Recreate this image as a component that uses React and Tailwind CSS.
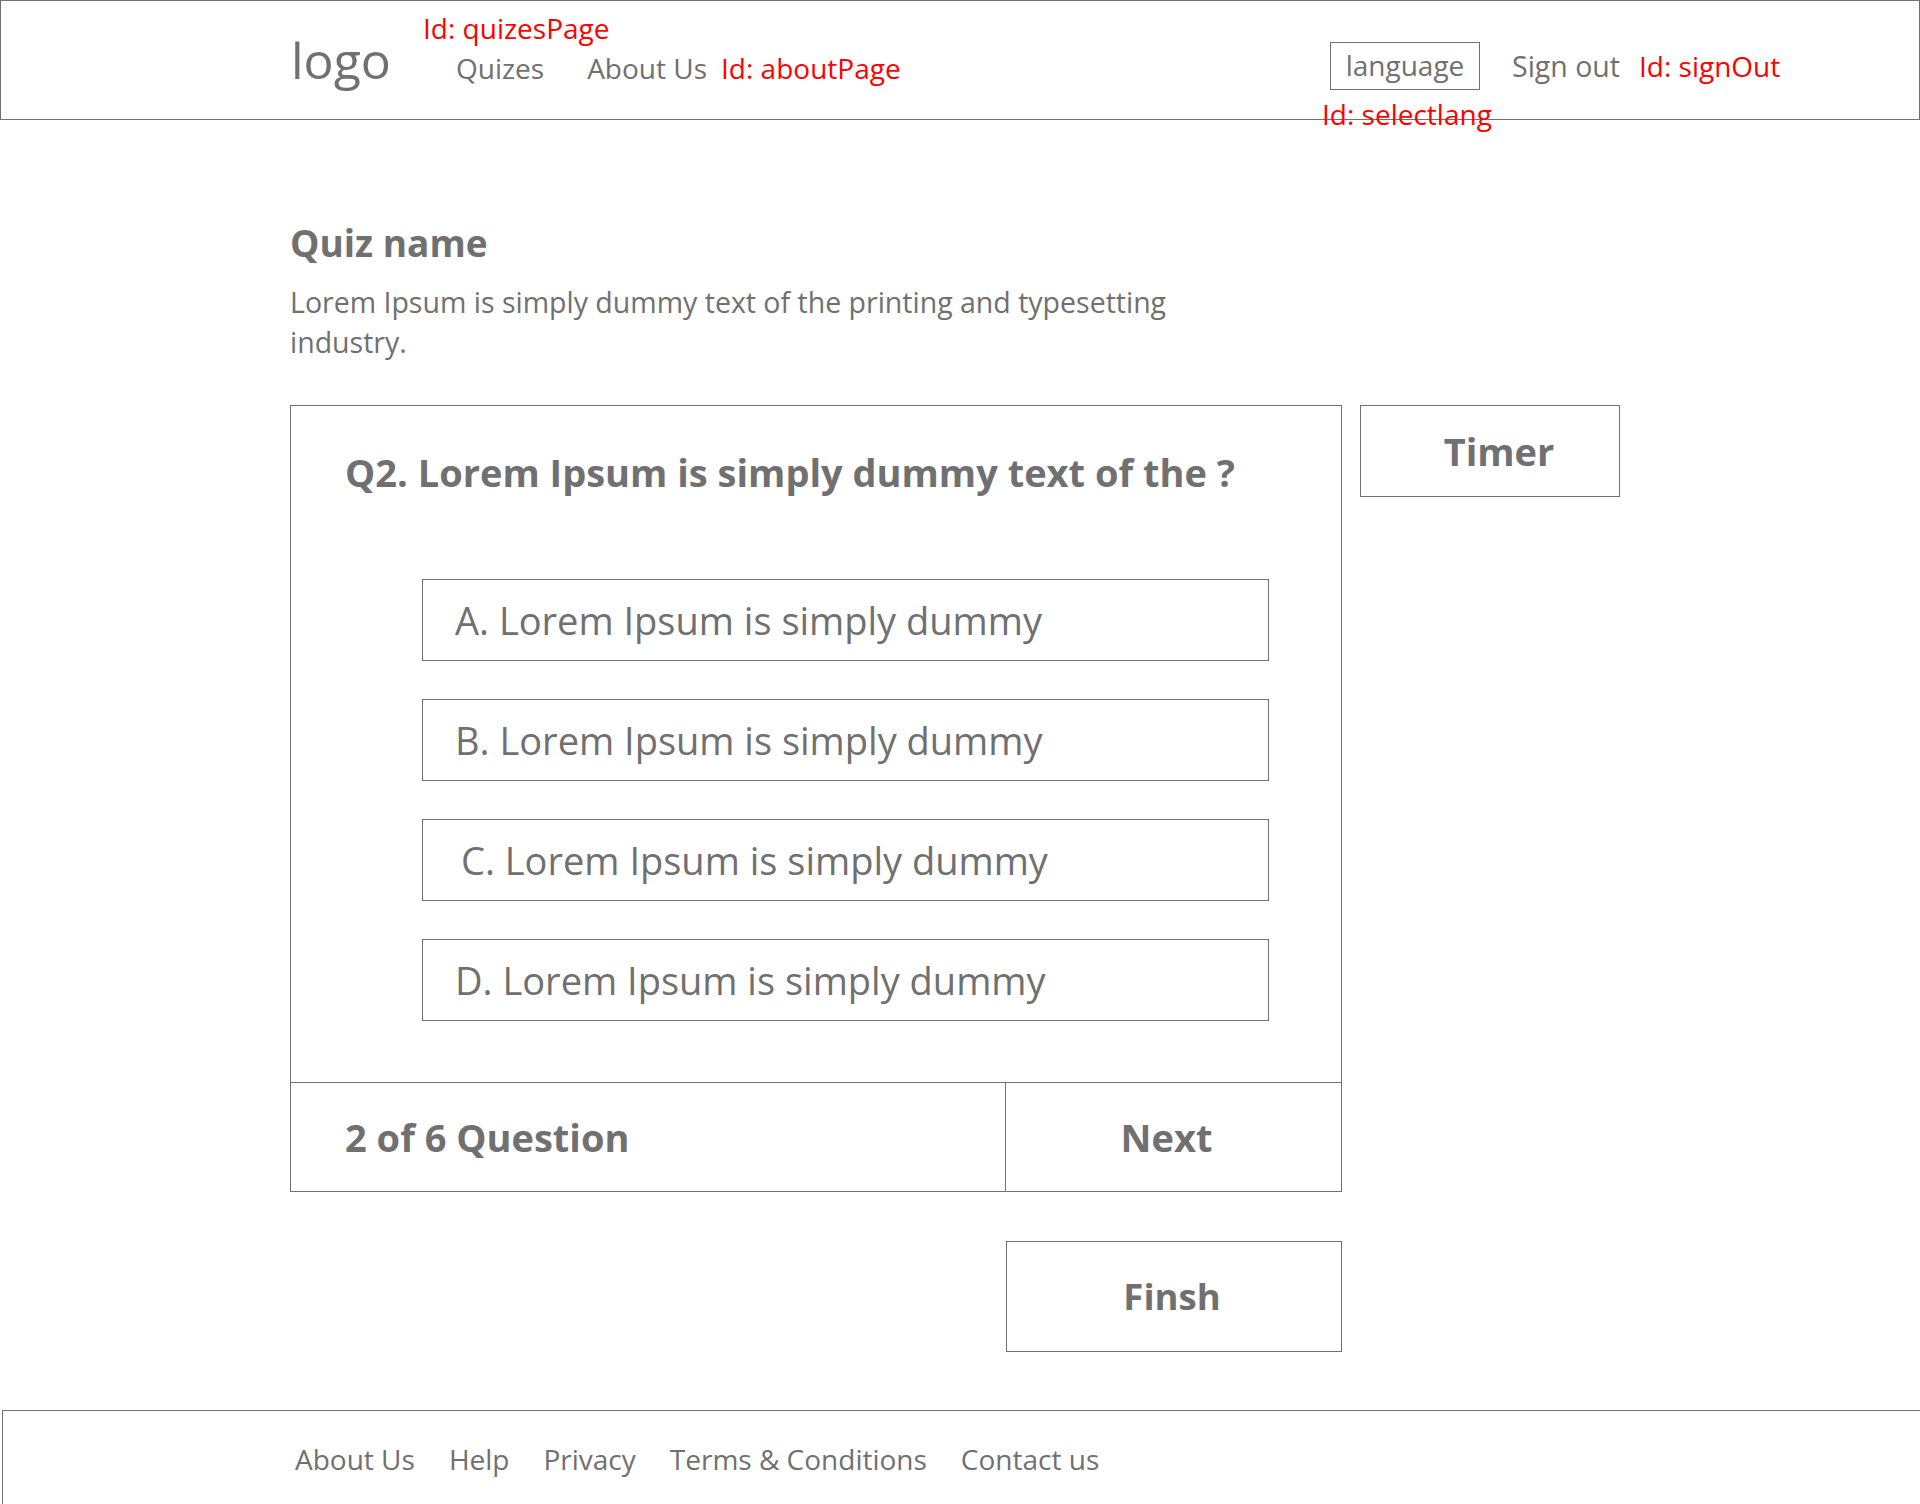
const options = [
  { label: 'A. Lorem Ipsum is simply dummy', pad: 'pl-[32px]' },
  { label: 'B. Lorem Ipsum is simply dummy', pad: 'pl-[32px]' },
  { label: 'C. Lorem Ipsum is simply dummy', pad: 'pl-[38px]' },
  { label: 'D. Lorem Ipsum is simply dummy', pad: 'pl-[32px]' },
];

const footerLinks = ['About Us', 'Help', 'Privacy', 'Terms & Conditions', 'Contact us'];

function Header() {
  return (
    <header className="relative h-[120px] border border-[#707070]">
      <div className="flex items-start pl-[290px]">
        {/* left: logo + nav */}
        <div className="flex w-[1039px] shrink-0 items-baseline pt-[34px]">
          <span className="text-[50px] leading-none">logo</span>
          <a className="ml-[65px] text-[28px] leading-none">Quizes</a>
          <a className="ml-[43px] text-[28px] leading-none">About Us</a>
          <span className="ml-[14px] text-[28px] leading-none text-[#ff0000]">Id: aboutPage</span>
        </div>
        {/* right: language + sign out */}
        <div className="flex items-center pt-[41px]">
          <div className="flex h-[48px] w-[150px] items-center justify-center border border-[#707070] pb-[3px] text-[28px]">
            language
          </div>
          <a className="ml-[32px] text-[28.5px] leading-none">Sign out</a>
          <span className="ml-[19px] text-[28px] leading-none text-[#ff0000]">Id: signOut</span>
        </div>
      </div>
      <span className="absolute left-[422px] top-[13px] text-[28px] leading-none text-[#ff0000]">Id: quizesPage</span>
      <span className="absolute left-[1321px] top-[99px] text-[28px] leading-none text-[#ff0000]">Id: selectlang</span>
    </header>
  );
}

function QuizCard() {
  return (
    <div className="w-[1052px] border border-[#707070]">
      <div className="pb-[61px] pl-[54px] pt-[47px]">
        <h2 className="text-[38px] font-bold leading-none">Q2. Lorem Ipsum is simply dummy text of the ?</h2>
        <div className="mt-[88px] ml-[77px] flex flex-col gap-[38px]">
          {options.map((opt) => (
            <button
              key={opt.label}
              type="button"
              className={`flex h-[82px] w-[847px] items-center border border-[#707070] text-left text-[38px] ${opt.pad}`}
            >
              {opt.label}
            </button>
          ))}
        </div>
      </div>
      <div className="flex h-[109px] border-t border-[#707070]">
        <div className="flex flex-1 items-center pl-[54px] text-[38px] font-bold">2 of 6 Question</div>
        <button type="button" className="flex w-[336px] items-center justify-center border-l border-[#707070] pr-[14px] text-[38px] font-bold">
          Next
        </button>
      </div>
    </div>
  );
}

export default function App() {
  return (
    <div className="min-h-[1504px] bg-white text-[#707070]" style={{ fontFamily: '"Open Sans", sans-serif' }}>
      <Header />

      <main className="pl-[290px] pt-[104px]">
        <h1 className="text-[37px] font-bold leading-none">Quiz name</h1>
        <p className="mt-[21px] w-[900px] text-[28.5px] leading-[40px]">
          Lorem Ipsum is simply dummy text of the printing and typesetting industry.
        </p>

        <div className="mt-[43px] flex items-start gap-[18px]">
          <div className="flex flex-col items-end">
            <QuizCard />
            <button
              type="button"
              className="mt-[49px] flex h-[111px] w-[336px] items-center justify-center border border-[#707070] pr-[4px] text-[36.5px] font-bold"
            >
              Finsh
            </button>
          </div>
          <div className="flex h-[92px] w-[260px] items-center justify-center border border-[#707070] pl-[18px] text-[38px] font-bold">
            Timer
          </div>
        </div>
      </main>

      <footer className="ml-[2px] mt-[58px] h-[100px] border-l border-t border-[#707070] pl-[292px] pt-[34px]">
        <nav className="flex gap-[34px] text-[28px] leading-none">
          {footerLinks.map((l) => (
            <a key={l}>{l}</a>
          ))}
        </nav>
      </footer>
    </div>
  );
}
